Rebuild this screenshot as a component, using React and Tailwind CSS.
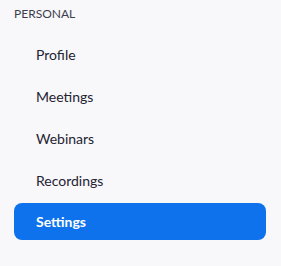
export default function App() {
  const items = ["Profile", "Meetings", "Webinars", "Recordings"];
  return (
    <div className="w-[281px] h-[266px] bg-[#f8f8fa] pt-[6px]" style={{ fontFamily: "Lato, 'Noto Sans', sans-serif" }}>
      <div className="px-[14px] text-[12px] leading-[15px] text-[#3d3d4e]">PERSONAL</div>
      <div className="mt-[14px] flex flex-col gap-[4px] pl-[14px] pr-[15px]">
        {items.map((t) => (
          <div key={t} className="h-[38px] flex items-center pl-[22px] text-[14px] text-[#232333]">{t}</div>
        ))}
        <div className="h-[37px] flex items-center pl-[22px] text-[14px] font-bold text-white bg-[#0e72ed] rounded-[8px]">Settings</div>
      </div>
    </div>
  );
}
